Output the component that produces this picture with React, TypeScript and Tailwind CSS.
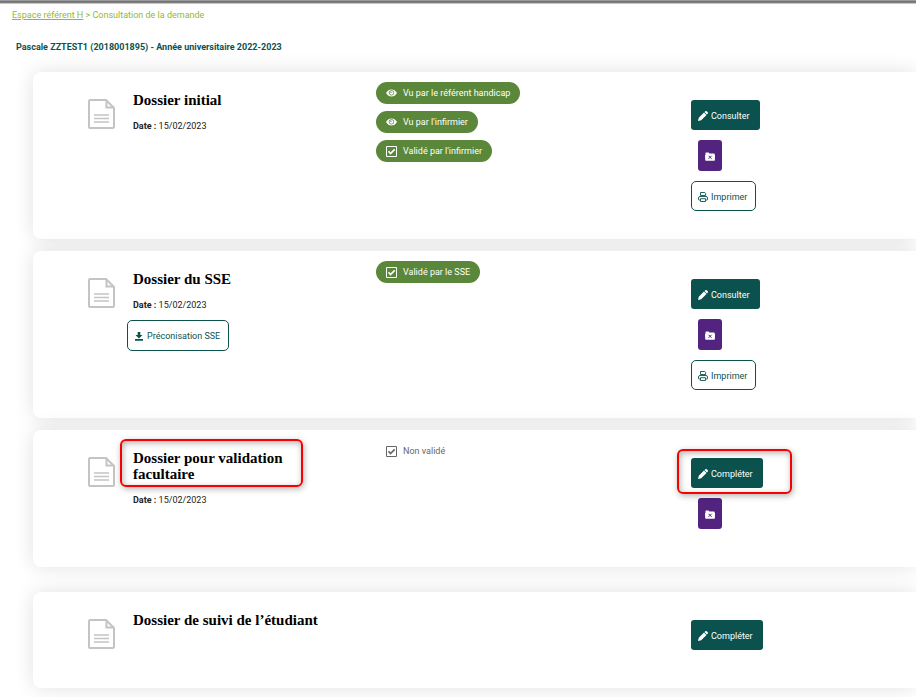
import React from 'react';

type ActionKind = 'consulter' | 'completer' | 'dossier' | 'imprimer';

interface Badge {
  icon: 'eye' | 'check';
  label: string;
  plain?: boolean;
}

interface Dossier {
  title: string;
  date?: string;
  preconisation?: boolean;
  badges: Badge[];
  actions: ActionKind[];
  highlighted?: boolean;
}

const dossiers: Dossier[] = [
  {
    title: 'Dossier initial',
    date: '15/02/2023',
    badges: [
      { icon: 'eye', label: 'Vu par le référent handicap' },
      { icon: 'eye', label: "Vu par l'infirmier" },
      { icon: 'check', label: "Validé par l'infirmier" },
    ],
    actions: ['consulter', 'dossier', 'imprimer'],
  },
  {
    title: 'Dossier du SSE',
    date: '15/02/2023',
    preconisation: true,
    badges: [{ icon: 'check', label: 'Validé par le SSE' }],
    actions: ['consulter', 'dossier', 'imprimer'],
  },
  {
    title: 'Dossier pour validation facultaire',
    date: '15/02/2023',
    badges: [{ icon: 'check', label: 'Non validé', plain: true }],
    actions: ['completer', 'dossier'],
    highlighted: true,
  },
  {
    title: 'Dossier de suivi de l’étudiant',
    badges: [],
    actions: ['completer'],
  },
];

const DocumentIcon = () => (
  <svg viewBox="0 0 27 30" className="h-[30px] w-[27px]" fill="none" stroke="#c4c4c4" strokeWidth="2">
    <path d="M2 1h16l8 8v19a1 1 0 0 1-1 1H2a1 1 0 0 1-1-1V2a1 1 0 0 1 1-1Z" />
    <path d="M18.500 1v7.500H26" />
    <path d="M6 16h15M6 19.500h15M6 23h15" strokeWidth="1.500" />
  </svg>
);

const EyeIcon = () => (
  <svg viewBox="0 0 11 8" className="h-2 w-[11px]">
    <path d="M0 4C1.500 1.500 3.300.5 5.500.5S9.500 1.500 11 4C9.500 6.500 7.700 7.500 5.500 7.500S1.500 6.500 0 4z" fill="white" />
    <circle cx="5.500" cy="3.800" r="2.300" fill="none" stroke="#5a873a" strokeWidth=".8" />
    <circle cx="5" cy="3.300" r=".7" fill="#5a873a" />
  </svg>
);

const CheckIcon = () => (
  <svg viewBox="0 0 11 11" className="size-[11px]" fill="none" stroke="currentColor">
    <path d="M.5.5h10v10H.5z" />
    <path d="M2.500 5.300l2 2.200 4.200-4.200" strokeWidth="1.700" />
  </svg>
);

const PencilIcon = () => (
  <svg viewBox="0 0 10 10" className="size-[10px]" fill="currentColor">
    <path d="M0 10l.8-3.200L6 1.600l2.500 2.500L3.200 9.200zM6.500 1.100l.7-.7c.5-.5 1.200-.5 1.700 0l.7.7c.5.500.5 1.200 0 1.700l-.7.7z" />
  </svg>
);

const FolderIcon = () => (
  <svg viewBox="0 0 10 9" className="h-[9px] w-[10px]">
    <path d="M.5 1Q.5.5 1 .5h2.500l1 1H9q.7 0 .7.700V8q0 .5-.7.500H1Q.5 8.500.5 8z" fill="white" />
    <path d="M0 3h10l-.4 5.500H.5z" fill="white" />
    <path d="M3.600 3.800l3 3M6.600 3.800l-3 3" stroke="#52247f" />
  </svg>
);

const PrinterIcon = () => (
  <svg viewBox="0 0 10 10" className="size-[10px]" fill="none" stroke="currentColor" strokeWidth=".9">
    <path d="M2.500 3.500v-3h4.300l.8.900v2.100z" />
    <path d="M2 8H1Q.5 8 .5 7.500V6Q.5 4.500 2 4.500h6Q9.500 4.500 9.500 6v1.500Q9.500 8 9 8H8" />
    <path d="M2.500 6.700h5v2.800h-5z" />
  </svg>
);

const DownloadIcon = () => (
  <svg viewBox="0 0 8 9" className="h-[9px] w-2" fill="currentColor">
    <path d="M2.700 0h2.600v3h2.200L4 6.500.5 3h2.200zM0 7h8v1.800H0z" />
  </svg>
);

const StatusBadge: React.FC<{ badge: Badge }> = ({ badge }) => (
  <span
    className={`flex h-[22px] items-center gap-[6px] rounded-full pr-[10px] pl-[10px] ${
      badge.plain ? 'text-[#666666]' : 'bg-[#5a873a] text-white'
    }`}
  >
    {badge.icon === 'eye' ? <EyeIcon /> : <CheckIcon />}
    {badge.label}
  </span>
);

const Highlight: React.FC<{ className: string }> = ({ className }) => (
  <span
    className={`pointer-events-none absolute rounded-md border-2 border-[#f80000] shadow-[1px_2px_6px_rgba(0,0,0,0.3),inset_1px_2px_6px_rgba(0,0,0,0.3)] ${className}`}
  />
);

const ActionButton: React.FC<{ kind: ActionKind }> = ({ kind }) => {
  if (kind === 'dossier') {
    return (
      <button
        type="button"
        aria-label="Dossier"
        className="mb-[10px] ml-[7px] flex h-[31px] w-6 items-center justify-center rounded-[3px] bg-[#52247f] pt-[2px]"
      >
        <FolderIcon />
      </button>
    );
  }
  if (kind === 'imprimer') {
    return (
      <button
        type="button"
        className="flex h-[30px] items-center gap-[3px] rounded-[5px] border border-[#0b524e] pt-[2px] pr-2 pl-[6px] text-[#0b524e]"
      >
        <PrinterIcon />
        Imprimer
      </button>
    );
  }
  return (
    <button
      type="button"
      className="mb-[10px] flex h-[30px] items-center gap-[3px] rounded-[3px] bg-[#0b524e] pt-[2px] pr-[10px] pl-[7px] text-white"
    >
      <PencilIcon />
      {kind === 'consulter' ? 'Consulter' : 'Compléter'}
    </button>
  );
};

const DossierCard: React.FC<{ dossier: Dossier }> = ({ dossier }) => (
  <section
    className={`grid grid-cols-[100px_243fr_315fr_225fr] rounded-l-lg bg-white pb-7 shadow-[0_0_20px_rgba(0,0,0,0.12)] ${
      dossier.highlighted ? 'mb-[25px]' : 'mb-3'
    }`}
  >
    <div className="pt-[27px] pl-[55px]">
      <DocumentIcon />
    </div>

    <div className="pt-5">
      <div className="relative">
        <h2 className="max-w-[200px] font-['Liberation_Serif',serif] text-[15px] leading-4 font-bold text-black">
          {dossier.title}
        </h2>
        {dossier.highlighted && <Highlight className="-top-[11px] -left-[13px] h-12 w-[183px]" />}
      </div>
      {dossier.date && (
        <p className="mt-[10px] leading-4 text-[#222222]">
          <strong>Date :</strong> {dossier.date}
        </p>
      )}
      {dossier.preconisation && (
        <button
          type="button"
          className="mt-[7px] -ml-[6px] flex h-[31px] items-center gap-1 rounded-[5px] border border-[#0b524e] pt-px pr-2 pl-[7px] text-[#0b524e]"
        >
          <DownloadIcon />
          Préconisation SSE
        </button>
      )}
    </div>

    <div className="flex flex-col items-start gap-[7px] pt-[10px]">
      {dossier.badges.map((badge) => (
        <StatusBadge key={badge.label} badge={badge} />
      ))}
    </div>

    <div className="relative flex flex-col items-start pt-7">
      {dossier.actions.map((kind) => (
        <ActionButton key={kind} kind={kind} />
      ))}
      {dossier.highlighted && <Highlight className="top-[19px] -left-[14px] h-[45px] w-[115px]" />}
    </div>
  </section>
);

export default function App() {
  return (
    <div className="overflow-hidden bg-white font-['Roboto',sans-serif] text-[9px] leading-4">
      <div className="h-1 bg-linear-to-b from-[#b0b0b0] via-[#606060] to-[#e8e8e8]" />

      <nav className="mt-[3px] ml-3 text-[#8fb935]">
        <a href="#" className="underline">
          Espace référent H
        </a>{' '}
        &gt; Consultation de la demande
      </nav>

      <h1 className="mt-4 ml-4 font-bold text-[#0b524e]">
        Pascale ZZTEST1 (2018001895) - Année universitaire 2022-2023
      </h1>

      <main className="mt-[17px] ml-[33px]">
        {dossiers.map((dossier) => (
          <DossierCard key={dossier.title} dossier={dossier} />
        ))}
      </main>
    </div>
  );
}
